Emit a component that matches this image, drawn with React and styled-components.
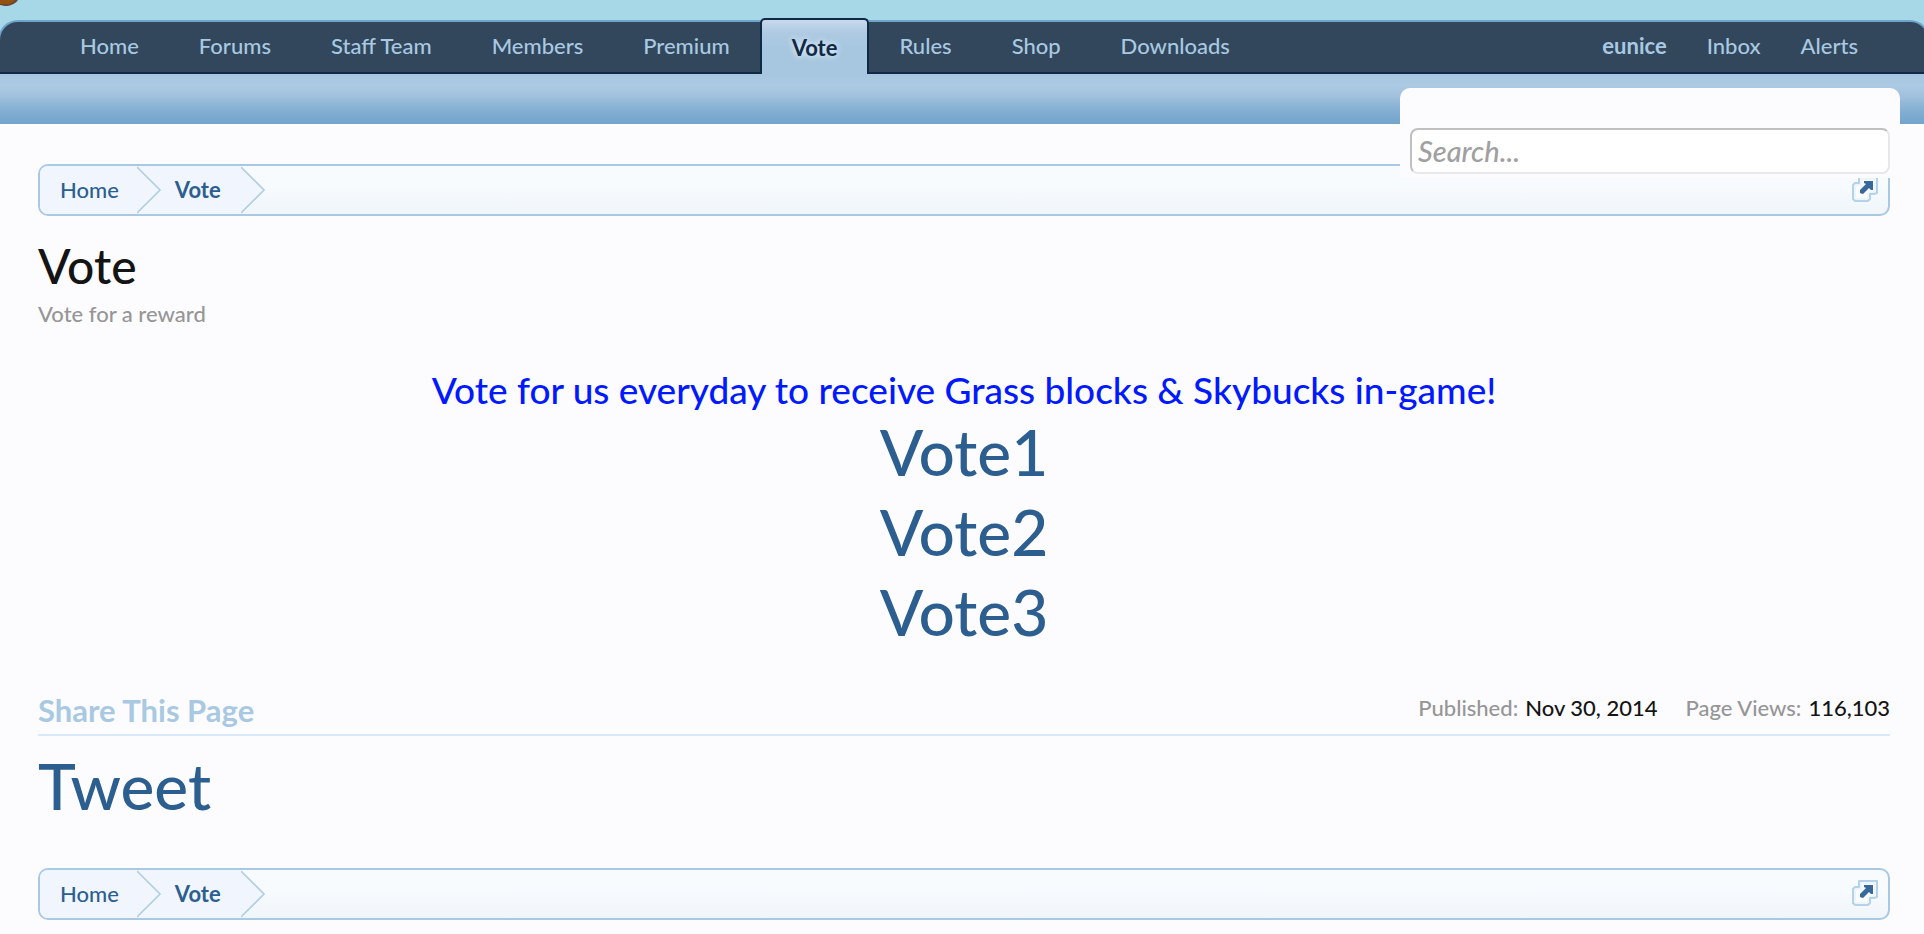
import React from "react";
import styled, { createGlobalStyle } from "styled-components";

const colors = {
  sky: "#a6d8e7",
  page: "#fcfcff",
  navy: "#32475b",
  dark: "#0f2a47",
  mid: "#6fa3cc",
  light: "#a9c9e2",
  link: "#2c5f90",
  muted: "#969696",
};

const mainTabs = [
  "Home",
  "Forums",
  "Staff Team",
  "Members",
  "Premium",
  "Vote",
  "Rules",
  "Shop",
  "Downloads",
];

const voteLinks = ["Vote1", "Vote2", "Vote3"];

const CrumbArrow = () => (
  <ArrowSvg width="24" height="48" viewBox="0 0 24 48" aria-hidden="true">
    <path d="M0 0V48L23 24Z" fill="#f1f6fe" />
    <path d="M0 1L23 24L0 47" fill="none" stroke="#b2cfe6" strokeWidth="1.6" />
  </ArrowSvg>
);

const PopupIcon = () => (
  <svg width="26" height="26" viewBox="0 0 26 26" aria-hidden="true">
    <path
      d="M7 1H25V17L22 18H18V23L16 25H3L1 23V9L3 7H7Z"
      fill="#edf4fb"
      stroke="#b4d2e8"
      strokeWidth="2"
      strokeLinejoin="round"
    />
    <path d="M4 10H9L6 16L9 19L15 16V22H4Z" fill="#fcfdff" />
    <path d="M9 4H22V16L19 15L12 20L6 16L10 10Z" fill="#f6fafe" />
    <path
      d="M12 5H21V14H19L17 12L11 18L8 17L8 14L14 8L12 7Z"
      fill="#36699a"
    />
  </svg>
);

const Breadcrumb = ({ label }) => (
  <CrumbBar aria-label={label}>
    <CrumbLink href="#home">Home</CrumbLink>
    <CrumbArrow />
    <CrumbLink href="#vote" $current>
      Vote
    </CrumbLink>
    <CrumbArrow />
    <JumpButton type="button" aria-label="Open quick navigation">
      <PopupIcon />
    </JumpButton>
  </CrumbBar>
);

const App = () => {
  return (
    <Page>
      <GlobalStyle />

      <Header>
        <LogoEdge viewBox="0 0 20 7" aria-hidden="true">
          <path d="M0 0H18C15 4 10 6 5 6L0 5Z" fill="#6b4636" />
          <path d="M0 0H15C12 3 9 5 4 4L0 4Z" fill="#94510f" />
        </LogoEdge>
        <Nav>
          <TabList>
            {mainTabs.map((tab) => (
              <li key={tab}>
                <Tab href="#" $active={tab === "Vote"}>
                  {tab}
                </Tab>
              </li>
            ))}
          </TabList>
          <TabList>
            <li>
              <VisitorTab href="#" $bold>
                eunice
              </VisitorTab>
            </li>
            <li>
              <VisitorTab href="#">Inbox</VisitorTab>
            </li>
            <li>
              <VisitorTab href="#">Alerts</VisitorTab>
            </li>
          </TabList>
        </Nav>
      </Header>

      <SubNav>
        <SearchPanel>
          <SearchInput type="search" placeholder="Search..." aria-label="Search" />
        </SearchPanel>
      </SubNav>

      <Content>
        <Breadcrumb label="Breadcrumb" />

        <Title>Vote</Title>
        <Description>Vote for a reward</Description>

        <VoteBlock>
          <Headline>
            Vote for us everyday to receive Grass blocks &amp; Skybucks in-game!
          </Headline>
          {voteLinks.map((name) => (
            <BigLink href="#" key={name}>
              {name}
            </BigLink>
          ))}
        </VoteBlock>

        <ShareHeader>
          <ShareTitle>Share This Page</ShareTitle>
          <Stats>
            <Stat>
              <dt>Published:</dt>
              <dd>Nov 30, 2014</dd>
            </Stat>
            <Stat>
              <dt>Page Views:</dt>
              <dd>116,103</dd>
            </Stat>
          </Stats>
        </ShareHeader>
        <ShareBody>
          <BigLink href="#">Tweet</BigLink>
        </ShareBody>

        <Breadcrumb label="Breadcrumb, bottom" />
      </Content>
    </Page>
  );
};

// Styled components

const GlobalStyle = createGlobalStyle`
  * {
    box-sizing: border-box;
  }

  body {
    margin: 0;
    background: ${colors.page};
    color: #141414;
    font-family: "Trebuchet MS", Lato, "Liberation Sans", sans-serif;
    font-size: 22px;
    font-weight: 500;
  }

  a {
    color: ${colors.link};
    text-decoration: none;
  }
`;

const Page = styled.div`
  overflow-x: hidden;
`;

const Header = styled.header`
  position: relative;
  padding-top: 20px;
  background: ${colors.sky};
`;

const LogoEdge = styled.svg`
  position: absolute;
  top: 0;
  left: 0;
  width: 20px;
  height: 7px;
`;

/* runs slightly past both edges of the window */
const Nav = styled.nav`
  display: flex;
  justify-content: space-between;
  height: 54px;
  margin: 0 -6px 0 -2px;
  padding: 0 50px;
  background: ${colors.navy};
  border: 2px solid ${colors.mid};
  border-bottom-color: ${colors.dark};
  border-radius: 20px 20px 0 0;
`;

const TabList = styled.ul`
  display: flex;
  margin: 0;
  padding: 0;
  list-style: none;
`;

const Tab = styled.a`
  display: block;
  padding: 0 30px;
  color: ${colors.light};
  line-height: 48px;

  ${({ $active }) =>
    $active &&
    `
    height: 56px;
    margin-top: -4px;
    border: 2px solid ${colors.dark};
    border-bottom: 0;
    border-radius: 5px 5px 0 0;
    background: linear-gradient(#c8d8eb, #aecae3 24%, #a7c7e0 50%, #a6c7df);
    color: ${colors.dark};
    font-weight: bold;
    line-height: 56px;
    text-shadow: 0 0 6px #ffffff;
  `}
`;

const VisitorTab = styled.a`
  display: block;
  padding: 0 20px;
  color: ${colors.light};
  font-weight: ${({ $bold }) => ($bold ? "bold" : "inherit")};
  line-height: 48px;
`;

const SubNav = styled.div`
  position: relative;
  height: 50px;
  background: linear-gradient(
    #a6c6df,
    #accae3 24%,
    #a0c0de 46%,
    #8fb7d7 60%,
    #7fabd1 80%,
    #72a5cc
  );
`;

/* hangs over the content below the bar */
const SearchPanel = styled.form`
  position: absolute;
  top: 14px;
  right: 24px;
  width: 500px;
  padding: 40px 10px 4px;
  border-radius: 10px 10px 0 0;
  background: ${colors.page};
`;

const SearchInput = styled.input`
  display: block;
  width: 100%;
  height: 46px;
  padding: 0 6px 2px;
  border: 2px solid;
  border-color: #c0c0c0 #e8e8e8 #e8e8e8 #c0c0c0;
  border-radius: 8px;
  background: #ffffff;
  font-family: inherit;
  font-size: 29px;
  font-style: italic;
  font-weight: 500;
  appearance: none;

  &::placeholder {
    color: #a0a0a0;
  }
`;

const Content = styled.main`
  padding: 40px 34px 14px 38px;
`;

const CrumbBar = styled.nav`
  display: flex;
  height: 52px;
  border: 2px solid ${colors.light};
  border-radius: 10px;
  background: linear-gradient(#f7fbfe 40%, #f0f5fa);
  overflow: hidden;
`;

const CrumbLink = styled.a`
  padding: ${({ $current }) => ($current ? "0 20px 0 14px" : "0 18px 0 20px")};
  background: #f1f6fe;
  font-weight: ${({ $current }) => ($current ? "bold" : "inherit")};
  line-height: 48px;
`;

const ArrowSvg = styled.svg`
  flex: none;

  &:not(:nth-last-child(2)) {
    background: #f1f6fe;
  }
`;

const JumpButton = styled.button`
  display: flex;
  align-items: center;
  margin-left: auto;
  padding: 0 10px 2px;
  border: 0;
  background: none;
  cursor: pointer;
`;

const Title = styled.h1`
  margin: 20px 0 4px;
  font-size: 48px;
  font-weight: 500;
  line-height: 60px;
`;

const Description = styled.p`
  margin: 0;
  color: ${colors.muted};
  line-height: 28px;
`;

const VoteBlock = styled.section`
  display: flex;
  flex-direction: column;
  align-items: center;
  margin-top: 40px;
`;

const Headline = styled.p`
  margin: 0;
  color: #0019ff;
  font-size: 37px;
  line-height: 44px;
`;

const BigLink = styled.a`
  font-size: 64px;
  line-height: 80px;
`;

const ShareHeader = styled.div`
  display: flex;
  justify-content: space-between;
  align-items: flex-start;
  margin-top: 40px;
  padding-bottom: 6px;
  border-bottom: 2px solid #d9e9f8;
`;

const ShareTitle = styled.h2`
  margin: 0;
  color: ${colors.light};
  font-size: 31px;
  line-height: 36px;
`;

const Stats = styled.dl`
  display: flex;
  gap: 28px;
  margin: 0;
  line-height: 32px;
`;

const Stat = styled.div`
  display: flex;
  gap: 7px;

  dt {
    color: ${colors.muted};
  }

  dd {
    margin: 0;
  }
`;

const ShareBody = styled.div`
  display: flex;
  padding: 10px 0 42px;
`;

export default App;
